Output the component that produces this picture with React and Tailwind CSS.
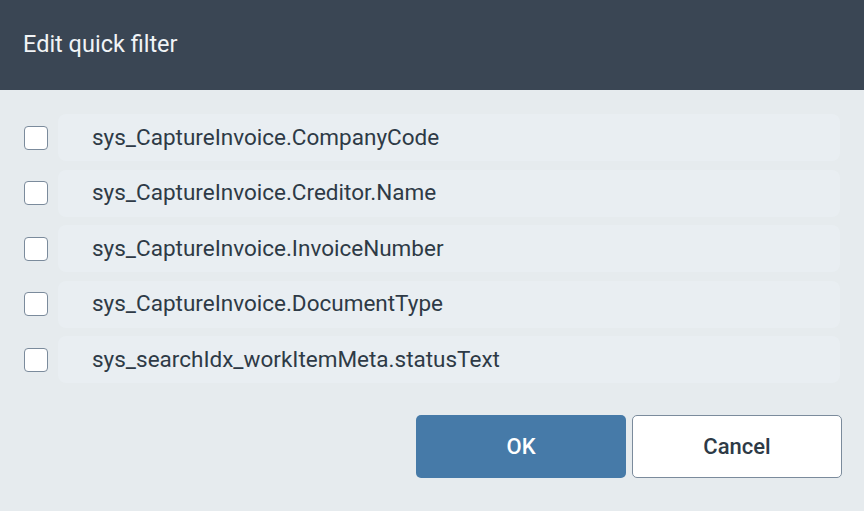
import React, { useState } from "react";

const fields = [
  "sys_CaptureInvoice.CompanyCode",
  "sys_CaptureInvoice.Creditor.Name",
  "sys_CaptureInvoice.InvoiceNumber",
  "sys_CaptureInvoice.DocumentType",
  "sys_searchIdx_workItemMeta.statusText",
];

const App = () => {
  const [checked, setChecked] = useState([]);

  const toggle = (name) => {
    setChecked((prev) =>
      prev.includes(name) ? prev.filter((n) => n !== name) : [...prev, name]
    );
  };

  return (
    <div
      className="w-[864px] h-[511px] flex flex-col bg-[#e6ebee] overflow-hidden"
      style={{ fontFamily: "Roboto, 'Liberation Sans', sans-serif" }}
    >
      {/* Header */}
      <div className="h-[90px] shrink-0 bg-[#3a4654] flex items-center px-[23px]">
        <h2 className="text-[23.5px] text-[#f1f4f6] leading-none">Edit quick filter</h2>
      </div>

      {/* List */}
      <div className="pt-[24px] pl-[24px] pr-[24px] flex flex-col gap-[8.5px]">
        {fields.map((f) => (
          <div key={f} className="flex items-center gap-[10px]">
            <button
              type="button"
              onClick={() => toggle(f)}
              className="w-[24px] h-[24px] shrink-0 rounded-[4px] border border-[#7b8b9c] bg-white"
            />
            <div className="flex-1 h-[47px] rounded-[8px] bg-[#e9eef2] flex items-center pl-[34px] text-[22.5px] text-[#2e3a46]">
              {f}
            </div>
          </div>
        ))}
      </div>

      {/* Actions */}
      <div className="flex justify-end gap-[6px] pt-[32px] pr-[22px]">
        <button
          type="button"
          className="w-[210px] h-[63px] rounded-[5px] bg-[#467aa8] text-white text-[22px] font-medium"
        >
          OK
        </button>
        <button
          type="button"
          className="w-[210px] h-[63px] rounded-[5px] bg-white border border-[#7b8b9c] text-[#2e3a46] text-[22px] font-medium"
        >
          Cancel
        </button>
      </div>
    </div>
  );
};

export default App;
